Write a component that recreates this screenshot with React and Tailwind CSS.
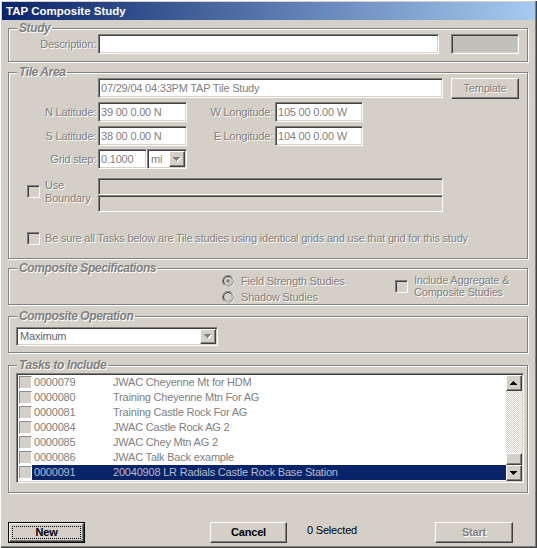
import React from "react";

const dis = "text-[#808080] [text-shadow:1px_1px_0_#fff]";
const sunken =
  "border border-t-[#808080] border-l-[#808080] border-r-white border-b-white shadow-[inset_1px_1px_0_#404040,inset_-1px_-1px_0_#d4d0c8]";
const raised =
  "border border-t-white border-l-white border-r-[#404040] border-b-[#404040] shadow-[inset_-1px_-1px_0_#808080]";

function Arrow({ up = false, color = "#000", shadow = false }) {
  const rows = [7, 5, 3, 1];
  const r = up ? [...rows].reverse() : rows;
  return (
    <svg width="8" height="5" viewBox="0 0 8 5" className="block">
      {shadow &&
        r.map((w, i) => (
          <rect key={"s" + i} x={(7 - w) / 2 + 1} y={i + 1} width={w} height="1" fill="#fff" />
        ))}
      {r.map((w, i) => (
        <rect key={i} x={(7 - w) / 2} y={i} width={w} height="1" fill={color} />
      ))}
    </svg>
  );
}

function Group({ title, className = "", children }) {
  return (
    <div
      className={`relative w-[520px] border border-[#808080] shadow-[inset_1px_1px_0_#fff,1px_1px_0_#fff] ${className}`}
    >
      <span
        className={`absolute left-[8px] top-[-8px] px-[2px] bg-[#d4d0c8] font-bold italic text-[12px] leading-[14px] tracking-[-0.4px] whitespace-nowrap ${dis}`}
      >
        {title}
      </span>
      {children}
    </div>
  );
}

function Label({ w, children }) {
  return (
    <div className={`${w} h-[20px] flex items-center justify-end whitespace-nowrap ${dis}`}>
      {children}
    </div>
  );
}

function Field({ w, children }) {
  return (
    <div
      className={`${w} h-[20px] bg-white ${sunken} flex items-center pl-[2px] text-[#808080] whitespace-nowrap overflow-hidden`}
    >
      {children}
    </div>
  );
}

function Check({ className = "" }) {
  return <div className={`w-[13px] h-[13px] shrink-0 bg-[#d4d0c8] ${sunken} ${className}`} />;
}

function Radio({ checked }) {
  return (
    <svg width="12" height="12" viewBox="0 0 12 12" className="block shrink-0">
      <circle cx="6" cy="6" r="5" fill="#d4d0c8" />
      <circle cx="6" cy="6" r="5.5" fill="none" stroke="#808080" strokeWidth="1" />
      <path d="M10.6 2.4 A5.5 5.5 0 0 1 2.4 10.6" fill="none" stroke="#fff" strokeWidth="1" />
      <circle cx="6" cy="6" r="4.5" fill="none" stroke="#404040" strokeWidth="1" />
      <path d="M9.2 2.8 A4.5 4.5 0 0 1 2.8 9.2" fill="none" stroke="#d4d0c8" strokeWidth="1" />
      {checked && <circle cx="6" cy="6" r="1.8" fill="#808080" />}
    </svg>
  );
}

function DropBtn({ className = "" }) {
  return (
    <div className={`w-[16px] bg-[#d4d0c8] ${raised} flex items-center justify-center ${className}`}>
      <Arrow color="#808080" shadow />
    </div>
  );
}

const tasks = [
  ["0000079", "JWAC Cheyenne Mt for HDM"],
  ["0000080", "Training Cheyenne Mtn For AG"],
  ["0000081", "Training Castle Rock For AG"],
  ["0000084", "JWAC Castle Rock AG 2"],
  ["0000085", "JWAC Chey Mtn AG 2"],
  ["0000086", "JWAC Talk Back example"],
  ["0000091", "20040908 LR Radials Castle Rock Base Station"],
];

export default function App() {
  return (
    <div className="w-[537px] h-[548px] bg-[#d4d0c8] font-['Liberation_Sans',Arial,sans-serif] text-[11px] leading-[13px] tracking-[-0.2px] text-black flex flex-col overflow-hidden shadow-[inset_1px_1px_0_#fff,inset_-1px_-1px_0_#404040,inset_-2px_-2px_0_#808080]">
      <div className="mx-[2px] mt-[2px] h-[18px] shrink-0 bg-[linear-gradient(to_right,#0a246a,#a6caf0)] flex items-center pl-[4px] text-white font-bold text-[11.5px] tracking-normal">
        TAP Composite Study
      </div>

      <div className="pl-[8px] flex flex-col">
        {/* Study */}
        <Group title="Study" className="mt-[8px] h-[34px]">
          <div className="flex mt-[5px]">
            <Label w="w-[87px]">Description:</Label>
            <Field w="ml-[2px] w-[341px]" />
            <div className={`ml-[12px] w-[68px] h-[20px] bg-[#c2c0bb] ${sunken}`} />
          </div>
        </Group>

        {/* Tile Area */}
        <Group title="Tile Area" className="mt-[10px] h-[187px]">
          <div className="flex mt-[5px] items-start">
            <div className="w-[87px]" />
            <Field w="ml-[2px] w-[345px]">07/29/04 04:33PM TAP Tile Study</Field>
            <div
              className={`ml-[8px] w-[68px] h-[21px] bg-[#d4d0c8] ${raised} flex items-center justify-center ${dis}`}
            >
              Template
            </div>
          </div>
          <div className="flex mt-[3px]">
            <Label w="w-[87px]">N Latitude:</Label>
            <Field w="ml-[2px] w-[89px]">39 00 0.00 N</Field>
            <Label w="w-[86px]">W Longitude:</Label>
            <Field w="ml-[2px] w-[88px]">105 00 0.00 W</Field>
          </div>
          <div className="flex mt-[4px]">
            <Label w="w-[87px]">S Latitude:</Label>
            <Field w="ml-[2px] w-[89px]">38 00 0.00 N</Field>
            <Label w="w-[86px]">E Longitude:</Label>
            <Field w="ml-[2px] w-[88px]">104 00 0.00 W</Field>
          </div>
          <div className="flex mt-[3px]">
            <Label w="w-[87px]">Grid step:</Label>
            <Field w="ml-[2px] w-[49px]">0.1000</Field>
            <div className={`w-[40px] h-[20px] bg-white ${sunken} flex items-stretch p-[1px]`}>
              <div className="flex-1 flex items-center pl-[2px] text-[#808080]">mi</div>
              <DropBtn />
            </div>
          </div>
          <div className="flex mt-[9px]">
            <div className="w-[89px] flex items-start pl-[18px]">
              <Check className="mt-[7px]" />
              <div className={`ml-[5px] mt-[1px] leading-[13px] ${dis}`}>
                Use
                <br />
                Boundary
              </div>
            </div>
            <div className="flex flex-col">
              <div className={`w-[345px] h-[17px] bg-[#d4d0c8] ${sunken}`} />
              <div className={`w-[345px] h-[17px] bg-[#d4d0c8] ${sunken}`} />
            </div>
          </div>
          <div className="flex mt-[20px] pl-[18px] items-center h-[13px]">
            <Check />
            <span className={`ml-[5px] whitespace-nowrap ${dis}`}>
              Be sure all Tasks below are Tile studies using identical grids and use that grid for this study
            </span>
          </div>
        </Group>

        {/* Composite Specifications */}
        <Group title="Composite Specifications" className="mt-[9px] h-[37px]">
          <div className="flex pl-[213px]">
            <div className="w-[173px] flex flex-col pt-[4px]">
              <div className="h-[16px] flex items-center">
                <Radio checked />
                <span className={`ml-[7px] whitespace-nowrap ${dis}`}>Field Strength Studies</span>
              </div>
              <div className="h-[16px] flex items-center">
                <Radio />
                <span className={`ml-[7px] whitespace-nowrap ${dis}`}>Shadow Studies</span>
              </div>
            </div>
            <div className="flex items-start pt-[5px]">
              <Check className="mt-[6px]" />
              <div className={`ml-[6px] leading-[12px] whitespace-nowrap ${dis}`}>
                Include Aggregate &amp;
                <br />
                Composite Studies
              </div>
            </div>
          </div>
        </Group>

        {/* Composite Operation */}
        <Group title="Composite Operation" className="mt-[11px] h-[37px]">
          <div className={`ml-[7px] mt-[10px] w-[202px] h-[19px] bg-white ${sunken} flex items-stretch p-[1px]`}>
            <div className="flex-1 flex items-center pl-[2px] text-[#666]">Maximum</div>
            <DropBtn />
          </div>
        </Group>

        {/* Tasks to Include */}
        <Group title="Tasks to Include" className="mt-[12px] h-[128px]">
          <div className={`ml-[7px] mt-[7px] w-[508px] h-[110px] bg-white ${sunken} p-[1px] flex`}>
            <div className="flex-1 flex flex-col overflow-hidden">
              {tasks.map(([id, name], i) => {
                const sel = i === tasks.length - 1;
                return (
                  <div key={id} className="h-[15px] shrink-0 flex items-center">
                    <div className="ml-[1px] w-[13px] h-[13px] shrink-0 bg-[#d4d0c8] border border-t-[#8c8c8c] border-l-[#8c8c8c] border-r-white border-b-white" />
                    <div
                      className={`flex-1 h-[15px] flex items-center pl-[2px] whitespace-nowrap ${
                        sel ? "bg-[#0a246a] text-[#b9bccb]" : "text-[#808080]"
                      }`}
                    >
                      <span className="w-[79px] shrink-0">{id}</span>
                      <span>{name}</span>
                    </div>
                  </div>
                );
              })}
            </div>
            <div className="w-[16px] flex flex-col">
              <div className={`h-[16px] shrink-0 bg-[#d4d0c8] ${raised} flex items-center justify-center`}>
                <Arrow up />
              </div>
              <div className="flex-1 bg-[repeating-conic-gradient(#ffffff_0_25%,#d4d0c8_0_50%)] bg-[length:2px_2px]" />
              <div className={`h-[12px] shrink-0 bg-[#d4d0c8] ${raised}`} />
              <div className={`h-[16px] shrink-0 bg-[#d4d0c8] ${raised} flex items-center justify-center`}>
                <Arrow />
              </div>
            </div>
          </div>
        </Group>

        {/* Buttons */}
        <div className="flex mt-[29px] items-start">
          <div className="w-[77px] h-[21px] border border-black">
            <div className={`relative h-full bg-[#d4d0c8] ${raised} flex items-center justify-center font-bold`}>
              New
              <div className="absolute inset-[2px] border border-dotted border-black" />
            </div>
          </div>
          <div
            className={`ml-[125px] w-[77px] h-[21px] bg-[#d4d0c8] ${raised} flex items-center justify-center font-bold`}
          >
            Cancel
          </div>
          <div className="ml-[20px] w-[128px] pt-[2px]">0 Selected</div>
          <div
            className={`w-[78px] h-[21px] bg-[#d4d0c8] ${raised} flex items-center justify-center font-bold ${dis}`}
          >
            Start
          </div>
        </div>
      </div>
    </div>
  );
}
